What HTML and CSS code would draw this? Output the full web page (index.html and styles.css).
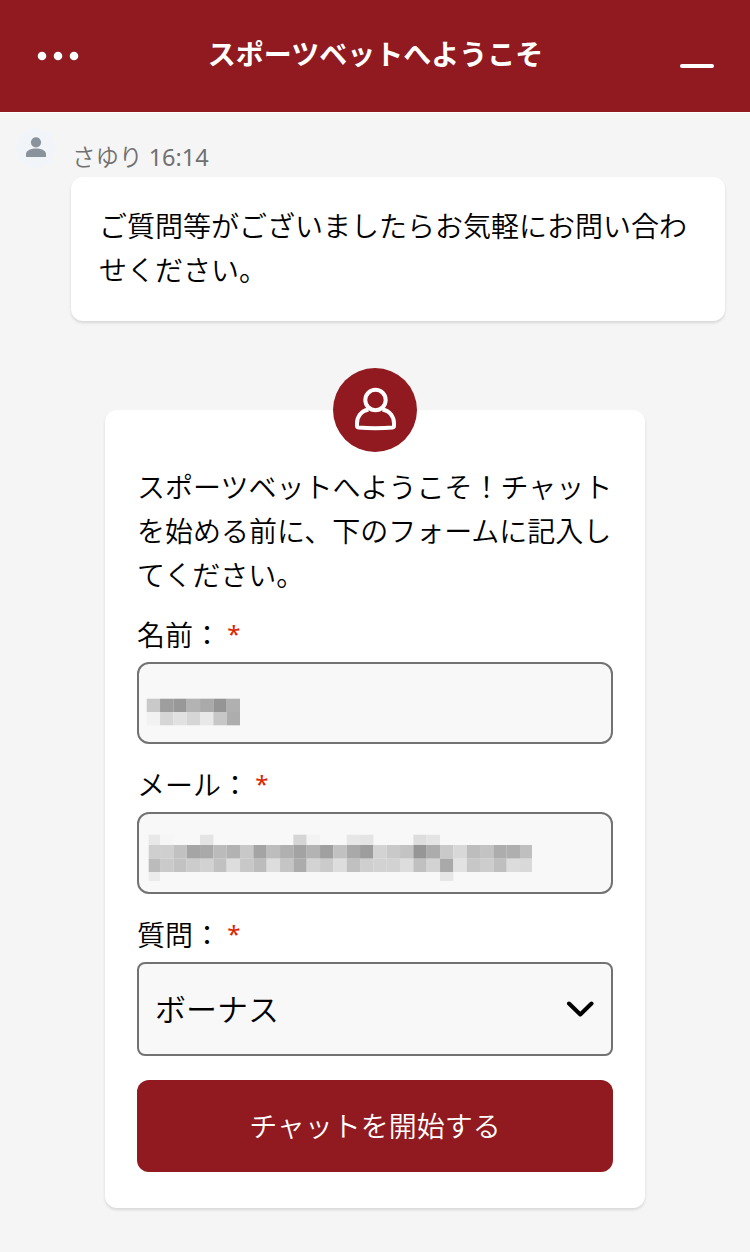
FILE: index.html
```html
<!DOCTYPE html>
<html lang="ja">
<head>
    <meta charset="UTF-8">
    <meta name="viewport" content="width=device-width, initial-scale=1.0">
    <title>スポーツベットへようこそ</title>
    <link rel="stylesheet" href="styles.css">
</head>
<body>
    <header class="chat-header">
        <svg class="menu-icon" width="42" height="10" viewBox="0 0 42 10" fill="#fff">
            <circle cx="5" cy="5" r="4.3"/>
            <circle cx="21" cy="5" r="4.3"/>
            <circle cx="37" cy="5" r="4.3"/>
        </svg>
        <h1>スポーツベットへようこそ</h1>
        <span class="minimize"></span>
    </header>

    <main class="chat-body">
        <div class="message">
            <div class="avatar">
                <svg width="40" height="40" viewBox="0 0 40 40" fill="#8a939b">
                    <circle cx="20" cy="14.3" r="5.1"/>
                    <path d="M10 29v-3c0-3.700 5.500-5.500 10-5.500s10 1.800 10 5.500v3z"/>
                </svg>
            </div>
            <div class="message-content">
                <div class="message-meta">さゆり <span class="time">16:14</span></div>
                <div class="bubble">ご質問等がございましたらお気軽にお問い合わせください。</div>
            </div>
        </div>

        <form class="card">
            <div class="badge">
                <svg width="84" height="84" viewBox="0 0 84 84" fill="none" stroke="#fff" stroke-width="4">
                    <path d="M35.500 41.500C28 43 24 48.500 24 55.500v2.500q0 1.200 1.500 1.400Q33 60.200 42.500 60.200T59.500 59.400Q61 59.200 61 58v-2.500C61 48.500 57 43 49.500 41.500" stroke-linejoin="round"/>
                    <circle cx="42.500" cy="32" r="10.200"/>
                </svg>
            </div>
            <p class="intro">スポーツベットへようこそ！チャットを始める前に、下のフォームに記入してください。</p>

            <div class="label">名前： <span class="required">*</span></div>
            <div class="field"><svg class="mosaic" id="nameMosaic" width="470" height="78"></svg></div>

            <div class="label">メール： <span class="required">*</span></div>
            <div class="field"><svg class="mosaic" id="mailMosaic" width="470" height="78"></svg></div>

            <div class="label">質問： <span class="required">*</span></div>
            <div class="select">
                <span>ボーナス</span>
                <svg width="28" height="18" viewBox="0 0 28 18" fill="none" stroke="#000" stroke-width="4" stroke-linecap="round" stroke-linejoin="round">
                    <path d="M3 3.500l11.300 11L25.500 3.500"/>
                </svg>
            </div>

            <button type="button" class="submit">チャットを開始する</button>
        </form>
    </main>

    <script>
        // Each row: top, height and the grey of every cell ('--' is empty)
        const nameRows = [
            [34.7, 13.3, 'c9 9e 98 b3 aa 95 b0'],
            [48, 13.3, 'f2 d6 e1 d6 e8 c7 ad']
        ];
        const mailRows = [
            [20.7, 10.3, 'e8 f6 -- -- e4 -- -- -- -- -- -- d5 f3 -- -- e7 e4 -- -- -- dd e4'],
            [31, 13.7, 'cf cf c1 a5 a9 bb b2 c8 a4 bd b0 a3 b3 a0 c1 a9 9d d3 c9 c3 96 ac c9 d8 bd c3 ad af bf'],
            [44.7, 13.3, 'bb ca c2 cc d2 c1 dd c8 bc dd c5 ac d3 cb dd c0 cf d2 d2 dd c0 d3 a9 e2 c7 cd bf dc d9'],
            [58, 9, 'eb -- -- -- -- -- -- -- -- -- -- -- -- -- -- -- -- -- -- -- -- -- e6']
        ];

        function drawMosaic(id, rows, left, right) {
            const svg = document.getElementById(id);
            rows.forEach(([top, height, cells]) => {
                cells.split(' ').forEach((c, i) => {
                    if (c === '--') return;
                    const x1 = Math.max(7.7 + i * 13.333, left);
                    const x2 = Math.min(7.7 + (i + 1) * 13.333, right);
                    const rect = document.createElementNS('http://www.w3.org/2000/svg', 'rect');
                    rect.setAttribute('x', x1);
                    rect.setAttribute('y', top);
                    rect.setAttribute('width', x2 - x1);
                    rect.setAttribute('height', height);
                    rect.setAttribute('fill', '#' + c + c + c);
                    svg.appendChild(rect);
                });
            });
        }

        drawMosaic('nameMosaic', nameRows, 7.7, 101);
        drawMosaic('mailMosaic', mailRows, 9.7, 393);
    </script>
</body>
</html>
```
FILE: styles.css
```css
* { box-sizing: border-box; }

body {
    margin: 0;
    min-height: 1252px;
    background: #f5f5f5;
    color: #000;
    font-family: "Noto Sans CJK JP", sans-serif;
    font-size: 28px;
    font-weight: 350;
    line-height: 44px;
}

.chat-header {
    display: flex;
    justify-content: space-between;
    align-items: center;
    height: 112px;
    padding: 0 36px 0 37px;
    background: #901a20;
}
.chat-header h1 {
    margin: 0 0 6px;
    color: #fff;
    font-size: 28px;
    font-weight: 700;
}
.menu-icon { display: block; }
.minimize {
    width: 34px;
    height: 4px;
    margin: 20px 0 0 8px;
    border-radius: 2px;
    background: #fff;
}

.chat-body { border-top: 1px solid #fff; }

.message {
    display: flex;
    gap: 15px;
    padding: 15px 25px 0 16px;
}
.avatar {
    width: 40px;
    height: 40px;
    border-radius: 50%;
    background: #f1f5f9;
}
.avatar svg { display: block; }
.message-content { flex: 1; }
.message-meta {
    height: 49px;
    padding: 7px 0 0 1px;
    color: #707070;
    font-family: "Noto Sans", "Noto Sans CJK JP", sans-serif;
    font-size: 23.5px;
    font-weight: 350;
}
.time { font-weight: 400; }
.bubble {
    height: 144px;
    padding: 26px 28px;
    border-radius: 12px;
    background: #fff;
    box-shadow: 0 2px 3px rgba(0, 0, 0, 0.12);
}

.card {
    position: relative;
    width: 540px;
    height: 798px;
    margin: 89px auto 0;
    padding: 54px 32px 0;
    border-radius: 12px;
    background: #fff;
    box-shadow: 0 2px 3px rgba(0, 0, 0, 0.12);
}
.badge {
    position: absolute;
    top: -42px;
    left: 228px;
    width: 84px;
    height: 84px;
    border-radius: 50%;
    background: #901a20;
}
.badge svg { display: block; }
.intro { margin: 0 0 16px; }

.label {
    height: 44px;
    margin-bottom: 6px;
}
.required {
    color: #dc2400;
    font-family: "Noto Sans", sans-serif;
    font-size: 24px;
    font-weight: 400;
    line-height: 1;
    vertical-align: 3px;
}
.field {
    height: 82px;
    margin-bottom: 18px;
    border: 2px solid #727272;
    border-radius: 12px;
    background: #f8f8f8;
}
.mosaic { display: block; }
.select {
    display: flex;
    justify-content: space-between;
    align-items: center;
    height: 94px;
    margin-bottom: 24px;
    padding: 0 17px 0 16px;
    border: 2px solid #727272;
    border-radius: 8px;
    background: #f8f8f8;
    font-size: 31px;
}
.select span { margin-bottom: 3px; }

.submit {
    display: block;
    width: 100%;
    height: 92px;
    padding: 0 0 2px;
    border: 0;
    border-radius: 12px;
    background: #901a20;
    color: #fff;
    font: inherit;
}
```
